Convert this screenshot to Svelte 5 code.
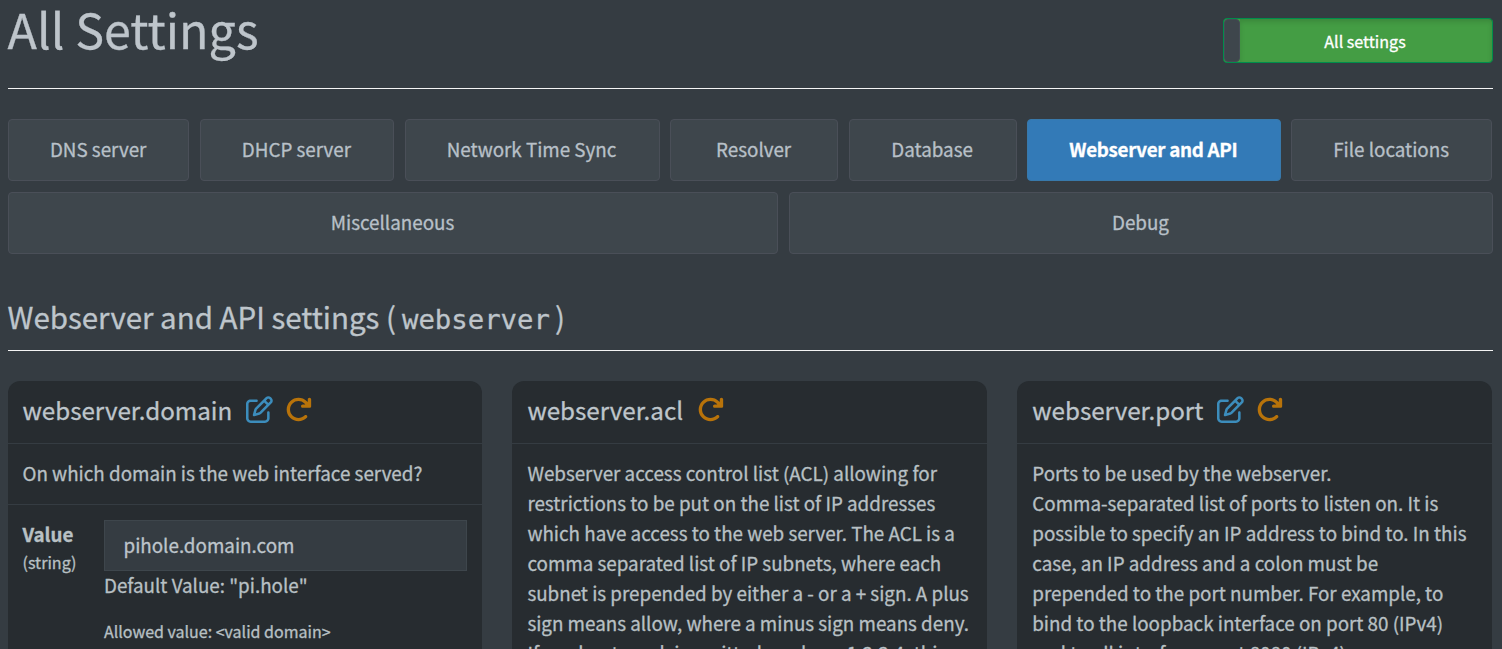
<script>
  const rows = [
    {
      cols: '181.3px 194.3px 255px 168px 168px 253.6px 200.8px',
      gap: '10.5px',
      tabs: ['DNS server', 'DHCP server', 'Network Time Sync', 'Resolver', 'Database', 'Webserver and API', 'File locations']
    },
    { cols: '770px 704px', gap: '11px', tabs: ['Miscellaneous', 'Debug'] }
  ];
  const active = 'Webserver and API';

  const cards = [
    {
      key: 'webserver.domain',
      modified: true,
      lines: ['On which domain is the web interface served?'],
      value: 'pihole.domain.com'
    },
    {
      key: 'webserver.acl',
      modified: false,
      lines: [
        'Webserver access control list (ACL) allowing for',
        'restrictions to be put on the list of IP addresses',
        'which have access to the web server. The ACL is a',
        'comma separated list of IP subnets, where each',
        'subnet is prepended by either a - or a + sign. A plus',
        'sign means allow, where a minus sign means deny.',
        'If a subnet mask is omitted, such as -1.2.3.4, this'
      ]
    },
    {
      key: 'webserver.port',
      modified: true,
      lines: [
        'Ports to be used by the webserver.',
        'Comma-separated list of ports to listen on. It is',
        'possible to specify an IP address to bind to. In this',
        'case, an IP address and a colon must be',
        'prepended to the port number. For example, to',
        'bind to the loopback interface on port 80 (IPv4)',
        'and to all interfaces port 8080 (IPv4)'
      ]
    }
  ];
</script>

<div class="page">
  <header class="top">
    <h1>All Settings</h1>
    <div class="toggle"><span class="handle"></span><span class="on">All settings</span></div>
  </header>

  <nav>
    {#each rows as row}
      <div class="tabs" style="grid-template-columns: {row.cols}; column-gap: {row.gap}">
        {#each row.tabs as tab}
          <button class:active={tab === active}>{tab}</button>
        {/each}
      </div>
    {/each}
  </nav>

  <h2>Webserver and API settings (<code>webserver</code>)</h2>

  <main>
    {#each cards as card}
      <section class="card">
        <div class="head">
          <h3>{card.key}</h3>
          {#if card.modified}
            <svg class="edit" viewBox="0 0 512 512"><path d="M441 58.9L453.1 71c9.4 9.4 9.4 24.6 0 33.9L424 134.1 377.9 88 407 58.9c9.4-9.4 24.6-9.4 33.9 0zM209.8 256.2L344 121.9 390.1 168 255.8 302.2c-2.9 2.9-6.5 5-10.4 6.1l-58.5 16.7 16.7-58.5c1.1-3.9 3.2-7.5 6.1-10.4zM373.1 25L175.8 222.2c-8.7 8.7-15 19.4-18.3 31.1l-28.6 100c-2.4 8.4-.1 17.4 6.1 23.6s15.2 8.5 23.6 6.1l100-28.6c11.8-3.4 22.5-9.7 31.1-18.3L487 138.9c28.1-28.1 28.1-73.7 0-101.8L474.9 25C446.8-3.1 401.2-3.1 373.1 25zM88 64C39.4 64 0 103.4 0 152V424c0 48.6 39.4 88 88 88H360c48.6 0 88-39.4 88-88V312c0-13.3-10.7-24-24-24s-24 10.7-24 24V424c0 22.1-17.9 40-40 40H88c-22.1 0-40-17.9-40-40V152c0-22.1 17.9-40 40-40H200c13.3 0 24-10.7 24-24s-10.7-24-24-24H88z" /></svg>
          {/if}
          <svg class="restart" viewBox="0 0 512 512"><path d="M386.3 160H336c-17.7 0-32 14.3-32 32s14.3 32 32 32H464c17.7 0 32-14.3 32-32V64c0-17.7-14.3-32-32-32s-32 14.3-32 32v51.2L414.4 97.6c-87.5-87.5-229.3-87.5-316.8 0s-87.5 229.3 0 316.8s229.3 87.5 316.8 0c12.5-12.5 12.5-32.8 0-45.3s-32.8-12.5-45.3 0c-62.5 62.5-163.8 62.5-226.3 0s-62.5-163.8 0-226.3s163.8-62.5 226.3 0L386.3 160z" /></svg>
        </div>
        <div class="desc">
          {#each card.lines as line}<div>{line}</div>{/each}
        </div>
        {#if card.value}
          <div class="field">
            <div class="label"><b>Value</b><span>(string)</span></div>
            <div class="control">
              <div class="input">{card.value}</div>
              <div class="default">Default Value: "pi.hole"</div>
              <div class="allowed">Allowed value: &lt;valid domain&gt;</div>
            </div>
          </div>
        {/if}
      </section>
    {/each}
  </main>
</div>

<style>
  :global(body) { margin: 0; background: #353c42; overflow: hidden; }
  .page {
    box-sizing: border-box;
    height: 649px;
    overflow: hidden;
    padding: 0 9px 0 8px;
    background: #353c42;
    color: #bec5cb;
    font: 18.81px/30px "Noto Sans CJK SC", "Noto Sans", sans-serif;
    white-space: nowrap;
    -webkit-text-stroke: .3px currentColor;
  }
  .top {
    display: flex;
    justify-content: space-between;
    height: 88px;
    border-bottom: 1px solid #f4f4f4;
  }
  h1, h2, h3 { margin: 0; font-weight: 400; color: #bec5cb; }
  h1 { margin-left: -.5px; font-size: 48.4px; line-height: 56px; }
  .toggle {
    box-sizing: border-box;
    display: flex;
    width: 270px;
    height: 45px;
    margin-top: 18px;
    border: 1px solid #008d4c;
    border-radius: 4px;
    background: #449d44;
    color: #fff;
    font-size: 16.1px;
    line-height: 44px;
  }
  .handle { box-sizing: border-box; width: 16px; background: #3e464c; border-radius: 4px; border: 1px solid #454c55; }
  .on { flex: 1; padding-right: 2px; text-align: center; box-shadow: inset 0 3px 5px rgba(0, 0, 0, .125); }
  nav { display: grid; row-gap: 11px; padding-top: 30px; }
  .tabs { display: grid; }
  button {
    height: 62px;
    padding: 0 1px 2px 0;
    border: 1px solid #4a4f58;
    border-radius: 4px;
    background: #3e464c;
    color: #b8c0c8;
    font: inherit;
    -webkit-text-stroke: inherit;
  }
  button.active { background: #337ab7; border-color: #3879ab; color: #fff; font-weight: 700; letter-spacing: -.3px; }
  h2 {
    height: 56px;
    margin: 40px 0 0;
    border-bottom: 1px solid #f4f4f4;
    font-size: 29.5px;
    line-height: 45px;
    text-indent: -.5px;
  }
  code { font: 27.3px/40px "DejaVu Sans Mono", monospace; padding: 0 5px 0 6px; }
  main { display: grid; grid-template-columns: repeat(3, 474.7px); gap: 30.2px; margin-left: -.5px; padding-top: 30px; }
  .card { height: 320px; border-radius: 12px; background: #272c30; color: #b8c0c4; }
  .head { display: flex; height: 62px; padding-left: 15px; border-bottom: 1px solid #353c42; }
  h3 { font-size: 24.2px; line-height: 58px; }
  svg { width: 27px; height: 27px; margin-top: 15px; }
  .edit { fill: #3c8dbc; margin-left: 13.5px; }
  .restart { fill: #b8730a; margin-left: 13.5px; }
  .edit + .restart { margin-left: 12.5px; }
  .desc { padding: 14px 15px 16px; }
  .field { display: flex; padding: 15px; border-top: 1px solid #353c42; }
  .label { width: 81.5px; margin-top: -1px; display: flex; flex-direction: column; }
  .label span { font-size: 16.1px; line-height: 26px; }
  .control { flex: 1; }
  .input {
    height: 49px;
    padding-left: 18.5px;
    border: 1px solid #3e464c;
    background: #353c42;
    color: #bec5cb;
    line-height: 48px;
  }
  .default { margin-top: -1px; }
  .allowed { margin-top: 16px; font-size: 16px; }
</style>
